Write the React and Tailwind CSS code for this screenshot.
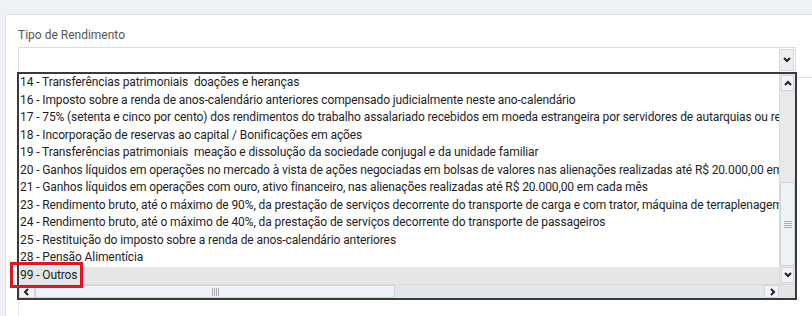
import React from "react";

const rows = [
  "14 - Transferências patrimoniais  doações e heranças",
  "16 - Imposto sobre a renda de anos-calendário anteriores compensado judicialmente neste ano-calendário",
  "17 - 75% (setenta e cinco por cento) dos rendimentos do trabalho assalariado recebidos em moeda estrangeira por servidores de autarquias ou repartições do Governo brasileiro situadas no exterior",
  "18 - Incorporação de reservas ao capital / Bonificações em ações",
  "19 - Transferências patrimoniais  meação e dissolução da sociedade conjugal e da unidade familiar",
  "20 - Ganhos líquidos em operações no mercado à vista de ações negociadas em bolsas de valores nas alienações realizadas até R$ 20.000,00 em cada mês, para o conjunto de ações",
  "21 - Ganhos líquidos em operações com ouro, ativo financeiro, nas alienações realizadas até R$ 20.000,00 em cada mês",
  "23 - Rendimento bruto, até o máximo de 90%, da prestação de serviços decorrente do transporte de carga e com trator, máquina de terraplenagem, colheitadeira e assemelhados",
  "24 - Rendimento bruto, até o máximo de 40%, da prestação de serviços decorrente do transporte de passageiros",
  "25 - Restituição do imposto sobre a renda de anos-calendário anteriores",
  "28 - Pensão Alimentícia",
  "99 - Outros",
];

function Chevron({ dir = "down", className = "" }) {
  const pts = {
    down: "2,3 5,6 8,3",
    up: "2,7 5,4 8,7",
    left: "6,2 3,5 6,8",
    right: "4,2 7,5 4,8",
  }[dir];
  return (
    <svg width="10" height="10" viewBox="0 0 10 10" className={className}>
      <polyline points={pts} fill="none" stroke="#222" strokeWidth="2" strokeLinejoin="miter" />
    </svg>
  );
}

export default function App() {
  return (
    <div
      className="relative w-[812px] h-[316px] overflow-hidden bg-[#eef1f5] pt-[14px] pl-[5px]"
      style={{ fontFamily: "Roboto, 'Liberation Sans', sans-serif" }}
    >
      <div className="h-full bg-white border-l border-t border-[#dde2e9] pl-[11px] pt-[13px] flex flex-col">
        <div className="text-[12px] leading-[14px] text-[#555] pl-[1px]">Tipo de Rendimento</div>
        <div className="mt-[5px] ml-[1px] w-[778px] h-[26px] border border-[#dcdcdc] flex justify-end items-center pr-[1px]">
          <div className="w-[15px] h-[22px] bg-[#eceef1] border border-[#d6d9dd] flex items-center justify-center">
            <Chevron dir="down" />
          </div>
        </div>
        <div className="flex -mt-[1px]">
          <div className="w-[780px] h-[228px] border-2 border-[#3a3a3a] flex flex-col bg-white">
            <div className="flex h-[210px]">
              <div className="w-[760px] overflow-hidden text-[12px] tracking-[-0.1px] text-[#1e1e1e]">
                {rows.map((r, i) => (
                  <div
                    key={i}
                    className={`h-[17.5px] leading-[17.5px] whitespace-pre pl-[1px] ${
                      i === rows.length - 1 ? "bg-[#e6e6e6]" : ""
                    }`}
                  >
                    {r}
                  </div>
                ))}
              </div>
              <div className="w-[16px] flex flex-col bg-[#e4e6e9] border-l border-[#d8dbdf]">
                <div className="h-[16px] flex items-center justify-center bg-[#f0f2f5] border border-[#d4d8dd] m-[1px]">
                  <Chevron dir="up" />
                </div>
                <div className="flex-1 bg-[#e8e9eb]" />
                <div className="h-[84px] bg-[#eef1f6] border border-[#cfd4da] flex items-center justify-center">
                  <div className="w-[8px] flex flex-col gap-[1px]">
                    <div className="h-[1px] bg-[#a9adb3]" />
                    <div className="h-[1px] bg-[#a9adb3]" />
                    <div className="h-[1px] bg-[#a9adb3]" />
                    <div className="h-[1px] bg-[#a9adb3]" />
                  </div>
                </div>
                <div className="h-[16px] flex items-center justify-center bg-[#f0f2f5] border border-[#d4d8dd] m-[1px]">
                  <Chevron dir="down" />
                </div>
              </div>
            </div>
            <div className="flex h-[14px] bg-[#e4e7ea] border-t border-[#d8dbdf]">
              <div className="w-[16px] flex items-center justify-center bg-[#f0f2f5] border border-[#d4d8dd]">
                <Chevron dir="left" />
              </div>
              <div className="w-[360px] bg-[#eef1f6] border border-[#cfd4da] flex items-center justify-center">
                <div className="h-[8px] flex gap-[1px]">
                  <div className="w-[1px] bg-[#a9adb3]" />
                  <div className="w-[1px] bg-[#a9adb3]" />
                  <div className="w-[1px] bg-[#a9adb3]" />
                  <div className="w-[1px] bg-[#a9adb3]" />
                </div>
              </div>
              <div className="flex-1 bg-[#e4e7ea]" />
              <div className="w-[15px] flex items-center justify-center bg-[#f0f2f5] border border-[#d4d8dd]">
                <Chevron dir="right" />
              </div>
              <div className="w-[16px] bg-[#e2e4e7]" />
            </div>
          </div>
          <div className="flex-1 mt-[5px] border-t border-[#dde2e9]" />
        </div>
        <div className="flex-1 ml-[1px] border-l border-[#e3e6ea]" />
      </div>
      <div className="absolute left-[10px] top-[262px] w-[73px] h-[26px] border-[3px] border-[#e3161f]" />
    </div>
  );
}
